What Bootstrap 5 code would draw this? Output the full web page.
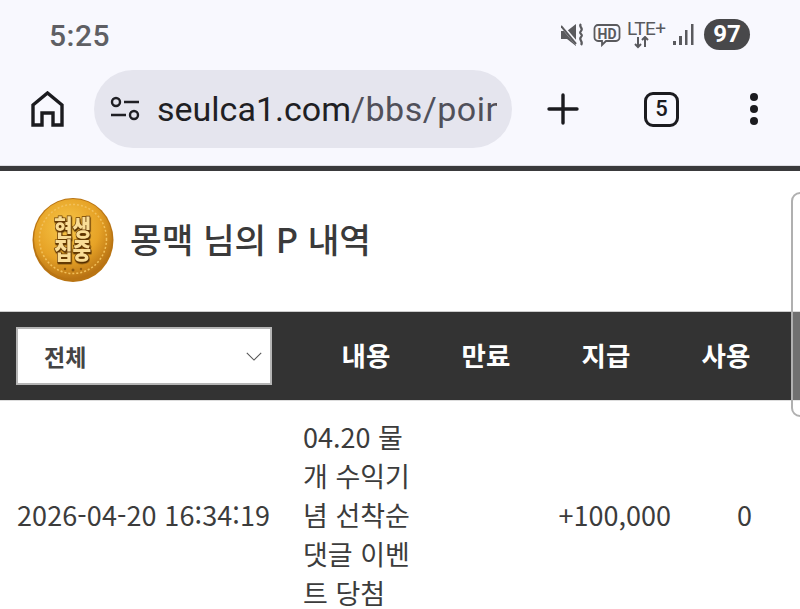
<!DOCTYPE html>
<html lang="ko">
<head>
  <meta charset="UTF-8" />
  <title>P 내역</title>
  <link href="https://cdn.jsdelivr.net/npm/bootstrap@5.3.0/dist/css/bootstrap.min.css" rel="stylesheet" />
  <style>
    html, body { height: 100%; }
    body {
      background: #fff;
      font-family: "Noto Sans CJK KR", "Noto Sans", sans-serif;
      color: #333;
      overflow: hidden;
      position: relative;
    }
    .chrome-area { background: #f8f8fe; height: 165px; font-family: Roboto, "Noto Sans", sans-serif; }
    .status-row { height: 65px; padding: 4px 50px 0 49px; }
    .status-time { font-size: 30px; font-weight: 500; color: #5f5f64; letter-spacing: .5px; line-height: 1; margin-top: 3px; }
    .status-icons { color: #5a5a5e; }
    .lte-box { width: 38px; height: 32px; margin-left: 6px; line-height: 1; }
    .lte-text { font-size: 19px; font-weight: 400; color: #5a5a5e; display: block; height: 17px; letter-spacing: -.5px; white-space: nowrap; }
    .batt-pill {
      width: 46px; height: 31px; border-radius: 16px; background: #48484a; color: #fff;
      font-size: 24px; font-weight: 700; line-height: 31px; text-align: center; margin-left: 10px;
    }
    .tool-row { height: 100px; padding: 5px 0 17px 31px; }
    .url-pill {
      width: 418px; height: 78px; margin-left: 30px; border-radius: 39px; background: #e5e5ee;
      padding-left: 16px; overflow: hidden; flex: none;
    }
    .url-text { font-size: 34px; color: #1f1f24; white-space: nowrap; overflow: hidden; width: 340px; margin-left: 17px; line-height: 78px; }
    .url-text span { color: #50505a; letter-spacing: .5px; }
    .tab-count {
      width: 35px; height: 35px; border: 3.5px solid #1b1b1f; border-radius: 9px; font-size: 22px; font-weight: 500;
      line-height: 27px; text-align: center; color: #1b1b1f;
    }
    .plus-slot { margin-left: 35px; }
    .tab-slot { margin-left: 65px; }
    .dots-slot { margin-left: 70px; }
    .page-rule { height: 5px; background: #3a3a3c; border-top: 1px solid #dedee4; box-sizing: content-box; }
    .title-band { height: 140px; padding-left: 32px; }
    .title-text { font-size: 34.4px; font-weight: 500; color: #3a3a3a; margin-left: 16px; line-height: 1; margin-bottom: 6px; }
    .head-band { height: 90px; background: #333; border-top: 1px solid #ccc; border-bottom: 1px solid #ddd; padding-left: 16px; }
    .kind-select {
      width: 256px; height: 58px; flex: none; border: 2px solid #b5b5b5; border-radius: 0; font-size: 23px; font-weight: 700; color: #444;
      padding: 0 30px 0 26px;
      background-size: 18px 11px; background-position: right 7px center;
      background-image: url("data:image/svg+xml,%3csvg xmlns='http://www.w3.org/2000/svg' viewBox='0 0 20 12'%3e%3cpath fill='none' stroke='%23555' stroke-width='1.2' d='M2 2l8 8 8-8'/%3e%3c/svg%3e");
    }
    .head-cols { margin-left: 34px; width: 480px; }
    .head-cols > div { width: 120px; text-align: center; font-size: 26.5px; font-weight: 700; color: #fff; line-height: 1; margin-bottom: 2px; }
    .data-row { font-size: 27px; line-height: 39px; color: #3c3c3c; padding: 16px 0 0 17px; }
    .cell-date { width: 286px; flex: none; white-space: nowrap; letter-spacing: .1px; }
    .cell-text { width: 112px; flex: none; word-break: break-all; }
    .cell-amt { width: 256px; flex: none; text-align: right; white-space: nowrap; }
    .cell-use { width: 81px; flex: none; text-align: right; }
    .scroll-thumb {
      position: absolute; left: 791px; top: 192px; width: 20px; height: 225px;
      border: 2px solid #b0b0b0; border-radius: 9px; background: rgba(255,255,255,.3);
    }
  </style>
</head>
<body>
  <div class="chrome-area">
    <div class="status-row d-flex align-items-center justify-content-between">
      <div class="status-time">5:25</div>
      <div class="status-icons d-flex align-items-center">
        <svg width="24" height="24" viewBox="0 0 24 24" fill="#5a5a5e">
          <path d="M0 8h6l9-7v22l-9-7H0z"/>
          <path d="M0 2l17 20" stroke="#f8f8fe" stroke-width="3.500"/>
          <path d="M0 3l15 18" stroke="#5a5a5e" stroke-width="2"/>
          <path d="M20 1c-3 3 3 4 0 7s3 3 0 6 3 4 0 8" fill="none" stroke="#5a5a5e" stroke-width="2.200"/>
        </svg>
        <svg class="ms-2" width="28" height="24" viewBox="0 0 28 24">
          <path d="M5 2h18a3.500 3.500 0 0 1 3.500 3.500v9a3.500 3.500 0 0 1-3.500 3.500H13l-4 4v-4H5a3.500 3.500 0 0 1-3.500-3.500v-9A3.500 3.500 0 0 1 5 2z" fill="none" stroke="#5a5a5e" stroke-width="1.800"/>
          <text x="14" y="15.500" text-anchor="middle" font-family="Roboto, sans-serif" font-size="14" font-weight="700" fill="#5a5a5e">HD</text>
        </svg>
        <div class="lte-box">
          <span class="lte-text">LTE+</span>
          <svg class="d-block" width="38" height="13" viewBox="0 0 38 13" fill="none" stroke="#5a5a5e" stroke-width="2">
            <path d="M11 1v10M8 8l3 3 3-3M18 11V1M15 4l3-3 3 3"/>
          </svg>
        </div>
        <svg class="ms-2" width="21" height="22" viewBox="0 0 21 22" fill="#5a5a5e">
          <rect x="0" y="17" width="3" height="4"/><rect x="6" y="12" width="3" height="9"/>
          <rect x="12" y="6" width="2.500" height="15"/><rect x="18" y="0" width="2.500" height="21"/>
        </svg>
        <div class="batt-pill">97</div>
      </div>
    </div>
    <div class="tool-row d-flex align-items-center">
      <svg width="33" height="36" viewBox="0 0 33 36" fill="none" stroke="#1b1b1f" stroke-width="3.400" stroke-linejoin="miter">
        <path d="M2 34V14L16.500 2 31 14v20h-9V22H11v12z"/>
      </svg>
      <div class="url-pill d-flex align-items-center">
        <svg width="30" height="26" viewBox="0 0 30 26" fill="none" stroke="#1f1f24" stroke-width="2.400">
          <circle cx="6" cy="6" r="4"/><path d="M14 6h15M1 19h15"/><circle cx="24" cy="19" r="4"/>
        </svg>
        <div class="url-text">seulca1.com<span>/bbs/point</span></div>
      </div>
      <svg class="plus-slot" width="32" height="32" viewBox="0 0 32 32" stroke="#1b1b1f" stroke-width="3.400" stroke-linecap="round">
        <path d="M16 2v28M2 16h28"/>
      </svg>
      <div class="tab-count tab-slot">5</div>
      <svg class="dots-slot" width="10" height="34" viewBox="0 0 10 34" fill="#1b1b1f">
        <circle cx="5" cy="5" r="4"/><circle cx="5" cy="17" r="4"/><circle cx="5" cy="29" r="4"/>
      </svg>
    </div>
  </div>
  <div class="page-rule"></div>

  <div class="title-band d-flex align-items-center">
    <svg width="82" height="88" viewBox="0 0 82 88">
      <defs>
        <radialGradient id="coinFill" cx="42%" cy="35%" r="70%">
          <stop offset="0" stop-color="#f8c748"/><stop offset=".6" stop-color="#e6a226"/><stop offset="1" stop-color="#b06a10"/>
        </radialGradient>
        <filter id="coinShade" x="-10%" y="-10%" width="120%" height="130%">
          <feDropShadow dx="0.600" dy="1.400" stdDeviation="0.300" flood-color="#4e2c06"/>
        </filter>
      </defs>
      <ellipse cx="41" cy="43" rx="40.500" ry="42" fill="#b97412"/>
      <ellipse cx="41" cy="42" rx="39" ry="40" fill="url(#coinFill)"/>
      <ellipse cx="41" cy="42" rx="33.500" ry="34.500" fill="none" stroke="#f2c05a" stroke-width="1.500" stroke-dasharray="2 2"/>
      <g transform="translate(40.500 0) scale(.88 1)" font-family="Noto Sans CJK KR, sans-serif" font-weight="900" font-size="23" text-anchor="middle" fill="#f9dd96" stroke="#6a3c08" stroke-width="1.400" paint-order="stroke" filter="url(#coinShade)">
        <text x="0" y="39">현생</text>
        <text x="0" y="62">집중</text>
      </g>
      <g fill="#8f5a10"><circle cx="33" cy="72" r="1.200"/><circle cx="41" cy="73" r="1.500"/><circle cx="49" cy="72" r="1.200"/></g>
    </svg>
    <div class="title-text">몽맥 님의 P 내역</div>
  </div>

  <div class="head-band d-flex align-items-center">
    <select class="form-select kind-select"><option>전체</option></select>
    <div class="head-cols d-flex">
      <div>내용</div><div>만료</div><div>지급</div><div>사용</div>
    </div>
  </div>

  <div class="data-row d-flex align-items-center">
    <div class="cell-date">2026-04-20 16:34:19</div>
    <div class="cell-text">04.20 물개 수익기념 선착순 댓글 이벤트 당첨</div>
    <div class="cell-amt">+100,000</div>
    <div class="cell-use">0</div>
  </div>

  <div class="scroll-thumb"></div>

  <script src="https://cdn.jsdelivr.net/npm/bootstrap@5.3.0/dist/js/bootstrap.bundle.min.js"></script>
</body>
</html>
